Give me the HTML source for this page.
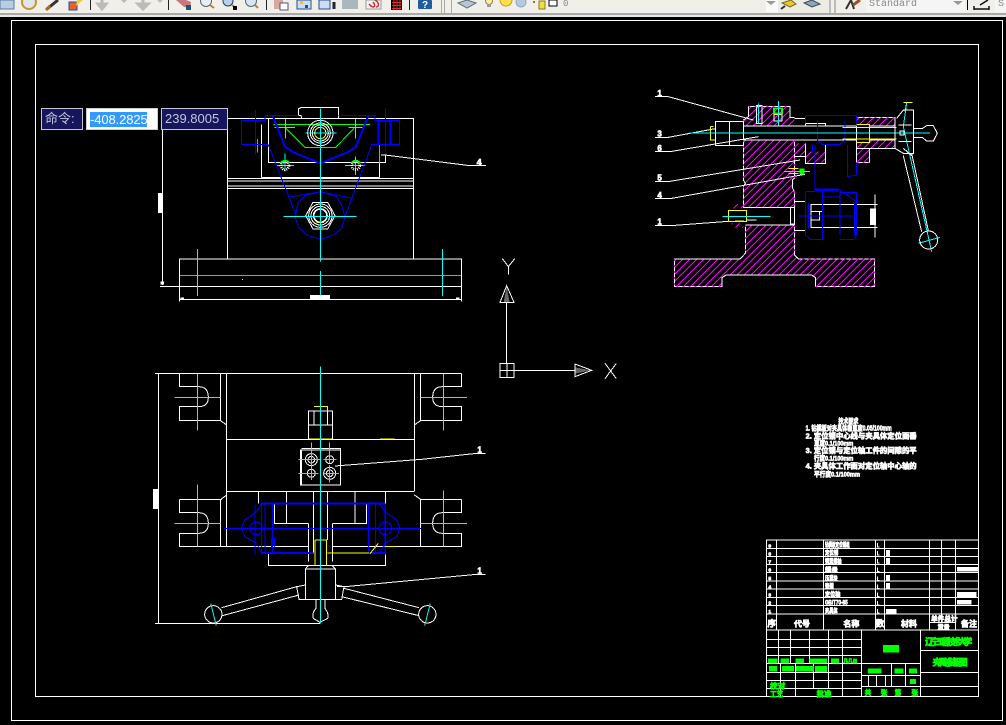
<!DOCTYPE html>
<html><head><meta charset="utf-8"><style>
html,body{margin:0;padding:0;background:#000}
#r{position:relative;width:1006px;height:725px;overflow:hidden;background:#000;font-family:"Liberation Sans","Noto Sans CJK SC",sans-serif}
.b{position:absolute;box-sizing:border-box;background:#16165c;border:1px solid #c4c4dc;color:#c4c4dc;font-size:13px;height:22px;line-height:20px;top:108px}
svg{position:absolute;left:0;top:0}
.w{fill:none;stroke:#fff;stroke-width:3}
.u{fill:none;stroke:#00f;stroke-width:3}
.t{fill:none;stroke:#00f;stroke-width:6}
.c{fill:none;stroke:#0ff;stroke-width:3}
.g{fill:none;stroke:#0f0;stroke-width:3}
.y{fill:none;stroke:#ff0;stroke-width:3}
.m{fill:none;stroke:#f0f;stroke-width:3;stroke-dasharray:6 12}
.n{font-family:"Liberation Sans","Noto Sans CJK SC",sans-serif;font-weight:bold;fill:#fff;stroke:#fff;stroke-width:2}
.gt{font-family:"Liberation Sans","Noto Sans CJK SC",sans-serif;font-weight:bold;fill:#0f0;stroke:#0f0;stroke-width:2}
</style></head><body><div id="r">
<svg width="1006" height="725" viewBox="0 0 1006 725" shape-rendering="crispEdges">
<defs>
<clipPath id="hc"><path d="M310 165H463V280L458 310L463 320V367H310V305L316 295L310 285ZM316 420H463V510L475 522H703V605H527V578L515 570H258L246 578V605H103V522H300L316 505ZM325 65H450V98H463V123H310V105L325 95ZM650 98H765V125H688V118H650ZM650 170H688V165H765V190H688V232H650ZM463 175H497V200H557V236H497V215H463ZM275 357H310V370H275ZM275 415H310V428H275Z"/></clipPath>
</defs>

<!-- toolbar -->
<rect x="0" y="0" width="1006" height="13" fill="#f0efe9"/>
<rect x="0" y="13" width="1006" height="2" fill="#a9a9a9"/>
<rect x="0" y="15" width="1006" height="2" fill="#e8e8e8"/>
<g shape-rendering="auto">
<rect x="0" y="0" width="14" height="9" fill="#b8cce4" stroke="#5a7aa0"/>
<circle cx="29" cy="2" r="7" fill="#dfe6ee" stroke="#c09a30" stroke-width="2"/>
<path d="M47 9L58 0" stroke="#333" stroke-width="3"/><path d="M46 10L50 6" stroke="#a86a20" stroke-width="3"/>
<rect x="69" y="2" width="8" height="8" fill="#e8622a" stroke="#2050a0"/><path d="M77 0L83 0L76 6Z" fill="#f0d040"/>
<path d="M102 0V6M98 4L102 9L106 4Z" stroke="#bbb" stroke-width="3" fill="#bbb"/><path d="M121 0L127 0L124 3Z" fill="#bbb"/>
<path d="M143 0V6M138 4L143 9L148 4Z" stroke="#bbb" stroke-width="3" fill="#bbb"/><path d="M157 0L163 0L160 3Z" fill="#bbb"/>
<path d="M176 0L184 7L190 8L191 2L186 0Z" fill="#c87878"/><rect x="186" y="5" width="5" height="5" fill="#205080"/>
<circle cx="206" cy="1" r="5.500" fill="#e8eef4" stroke="#567"/><path d="M210 5L214 8" stroke="#c08030" stroke-width="2"/>
<circle cx="228" cy="1" r="5" fill="#b8d0e8" stroke="#246"/><path d="M232 5L236 8" stroke="#c08030" stroke-width="2"/><rect x="233" y="6" width="4" height="4" fill="#000"/>
<circle cx="251" cy="1" r="5.500" fill="#d8e4f0" stroke="#567"/><path d="M255 5L258 8" stroke="#c08030" stroke-width="2"/>
<rect x="274" y="0" width="9" height="9" fill="#d8a8a0"/><rect x="280" y="3" width="8" height="7" fill="#fff" stroke="#556"/>
<rect x="297" y="0" width="14" height="9" fill="#cfdcf0" stroke="#24508c"/><rect x="300" y="1" width="3" height="3" fill="#e8c040"/><rect x="305" y="5" width="3" height="3" fill="#24508c"/>
<rect x="319" y="0" width="11" height="9" fill="#cfdcf0" stroke="#24508c"/><path d="M334 2V9" stroke="#223" stroke-width="3"/>
<rect x="342" y="0" width="16" height="9" fill="#a9b8bc"/>
<rect x="366" y="0" width="15" height="9" fill="#f4f4f4" stroke="#999"/><path d="M369 4C373 9 377 7 373 2M375 0C380 3 379 7 376 7" stroke="#d03030" stroke-width="1.500" fill="none"/>
<rect x="391" y="0" width="11" height="10" fill="#000"/><path d="M392 2.500H401M392 5.500H401M392 8.500H401M394 0V10M397 0V10M400 0V10" stroke="#e03030"/>
<rect x="418" y="0" width="14" height="9" rx="1" fill="#1f5d9c"/>
<text x="422" y="8" font-size="10" font-weight="bold" fill="#fff">?</text>
<path d="M458 3L467 0L476 3L467 8Z" fill="#b9c5d2" stroke="#5d6d7d"/>
<circle cx="489" cy="1" r="3.500" fill="#fbf2a0" stroke="#99803a"/><rect x="487" y="4" width="4" height="3" fill="#999"/>
<circle cx="506" cy="0" r="6" fill="#ffe24a" stroke="#c89b1a"/>
<circle cx="521" cy="2" r="5" fill="#b4c8e0" stroke="#8fa8c4"/>
<rect x="539" y="1" width="6" height="8" fill="#ece040" stroke="#8a7a20"/>
<path d="M533 2h2" stroke="#a07020" stroke-width="2"/>
<rect x="549" y="0" width="8" height="6" fill="#fff" stroke="#000"/>
<rect x="766" y="0" width="12" height="12" fill="#fafafa"/>
<path d="M766 1H776L771 5Z" fill="#999"/>
<rect x="778" y="0" width="50" height="13" fill="#ecece4"/>
<path d="M782 3L791 0L796 4L790 7Z" fill="#e8c830" stroke="#7a6a10"/><path d="M781 9L785 6" stroke="#234" stroke-width="2"/>
<path d="M804 3L812 0L820 4L812 7Z" fill="#8ca4bc" stroke="#3a4a5a"/>
<rect x="829" y="0" width="2" height="13" fill="#bbb"/><rect x="834" y="0" width="2" height="13" fill="#bbb"/>
<path d="M846 9L851 0M851 0L854 9" stroke="#333" stroke-width="2" fill="none"/><path d="M853 5L860 0" stroke="#a05020" stroke-width="3"/>
<rect x="866" y="0" width="99" height="12" fill="#f5f5f5"/>
<path d="M953 1H963L958 5Z" fill="#999"/>
<text x="869" y="6" font-size="10" font-family="Liberation Mono" fill="#888">Standard</text>
<rect x="967" y="0" width="1" height="10" fill="#000"/>
<path d="M974 9H989M980 5L988 0M974 6V10M989 6V10" stroke="#111" stroke-width="1.500"/>
<rect x="995" y="0" width="11" height="12" fill="#f5f5f5"/>
<text x="998" y="6" font-size="10" font-family="Liberation Mono" fill="#888">S</text>
<text x="563" y="6" font-size="9" font-family="Liberation Mono" fill="#888">0</text>
</g>
<path d="M90.500 0V10M168.500 0V10M266.500 0V10M409.500 0V10" stroke="#222"/>
<path d="M441.500 0V13M444.500 0V13M451.500 0V13" stroke="#aaa"/>

<!-- frames -->
<rect x="11.500" y="20.500" width="991" height="700" fill="none" stroke="#fff"/>
<rect x="35.500" y="44.500" width="943" height="652" fill="none" stroke="#fff"/>

<!-- front view -->
<g transform="translate(150,95) scale(.33333)">
<path class="w" d="M233 492V70H790V492M88 492H935V613H88ZM30 574H935M88 613V620M935 613V620M38 105V570M335 248V88M688 205V248M335 248H688M355 70V203H707V175M233 250H790M233 258H790M233 273H790M233 281H790M445 62V42L453 38H566V70M445 62H453L455 70M693 180H705L960 212H1008"/>
<rect x="24" y="294" width="14" height="60" fill="#fff"/><rect x="480" y="600" width="60" height="13" fill="#fff"/>
<rect x="32" y="560" width="10" height="8" fill="#fff"/><rect x="92" y="608" width="10" height="4" fill="#fff"/><rect x="918" y="608" width="10" height="4" fill="#fff"/>
<path class="g" d="M90 541H933M370 88H660M408 100L465 157H557L612 100M322 132V172M688 150V205"/>
<path class="c" d="M142 462V603M877 462V603M373 97H435M406 72V130M595 97H640M617 72V130M378 212H432M405 175V230M585 212H645M617 185V240"/>
<path class="u" d="M274 76H345V62H445M274 76V148H355M317 45V178M566 62H675V76H748V148H665M706 40V178M355 150L440 365M665 150L585 365M415 307L511 290L608 310M435 365L445 320L470 300L511 290L560 305L575 330L585 365L575 400L550 420L511 433L470 420L445 395L435 365"/>
<path class="t" d="M368 62L405 155L430 172L511 205L592 172L618 155L655 62M685 76V148M722 76V148M685 78H728"/>
<circle cx="511" cy="114" r="38" class="w"/><circle cx="511" cy="114" r="30" class="w"/><circle cx="511" cy="114" r="24" class="w"/>
<circle cx="511" cy="362" r="35" class="w"/><circle cx="511" cy="362" r="28" class="w"/><circle cx="511" cy="362" r="20" class="w" style="stroke-width:5"/>
<path class="w" d="M467 362L489 322H533L555 362L533 402H489Z"/>
<circle cx="405" cy="212" r="12" class="w" style="stroke-width:8;stroke-dasharray:3 3"/><circle cx="617" cy="212" r="12" class="w" style="stroke-width:8;stroke-dasharray:3 3"/>
<path d="M392 205A15 15 0 0 1 418 205" class="g" style="stroke-width:6"/><path d="M604 205A15 15 0 0 1 630 205" class="g" style="stroke-width:6"/>
<circle cx="511" cy="114" r="17" class="y"/>
<path d="M500 382H522" class="y"/>
<path class="c" d="M511 40V500M511 528V600M467 114H560M400 364H620"/>
<rect x="276" y="552" width="3" height="3" fill="#ff0"/>
<text x="980" y="212" font-size="27" class="n">4</text>
</g>

<!-- section view -->
<g transform="translate(640,85) scale(.33333)">
<path clip-path="url(#hc)" fill="none" stroke="#f0f" stroke-width="3" d="M168 0L0 168M189 0L0 189M210 0L0 210M231 0L0 231M252 0L0 252M273 0L0 273M294 0L0 294M315 0L0 315M336 0L0 336M357 0L0 357M378 0L0 378M399 0L0 399M420 0L0 420M441 0L0 441M462 0L0 462M483 0L0 483M504 0L0 504M525 0L0 525M546 0L0 546M567 0L0 567M588 0L0 588M609 0L0 609M630 0L0 630M651 0L0 651M672 0L0 672M693 0L0 693M714 0L0 714M735 0L0 735M756 0L0 756M777 0L0 777M798 0L0 798M819 0L0 819M840 0L0 840M861 0L0 861M882 0L0 882M903 0L0 903M924 0L0 924M945 0L0 945M966 0L0 966M987 0L0 987M1008 0L0 1008M1029 0L0 1029M1050 0L0 1050M1071 0L0 1071M1092 0L0 1092M1113 0L0 1113M1134 0L0 1134M1155 0L0 1155M1176 0L0 1176M1197 0L0 1197M1218 0L0 1218M1239 0L0 1239M1260 0L0 1260M1281 0L0 1281M1302 0L0 1302M1323 0L0 1323M1344 0L0 1344M1365 0L0 1365"/>
<path class="w" d="M310 123V165H650M310 123H650M226 109H310V181H226ZM268 109V181M316 420V505L300 522H103V605H246V578L258 570H515L527 578V605H703V522H475L463 510V320L458 310V285L463 280V165M310 165V285L316 295L310 305V367H463M316 420H463M463 100H497V123M463 349H497V437H463M451 367H463V417H451ZM497 115H557V123M688 123H765V165H688M650 98H765V123M650 190H765M765 98V190M650 123V232H688V190M310 105L325 95V65H450V98H463M350 62H366V115H350ZM402 88H426V108H402ZM463 175V215H497M497 175V236H557V180M45 35H85L340 105M45 157H85L226 131M45 200H90L355 155M45 289H90L480 225M45 341H90L495 268M45 421H105L265 409M320 405H350M513 358H548V427H513ZM513 358H712M513 427H712M513 380H548M538 380V405H513M705 328V458"/>
<path class="m" d="M103 522V605H246M527 605H703V522H475M325 65H450M310 165V285M310 305V367M463 165V280M463 320V367M316 420V505M463 420V510M650 98H765M650 232H688"/>
<rect x="690" y="370" width="18" height="50" fill="#fff"/>
<path class="u" d="M497 92H650V115M497 92V115M533 107V165L545 178H600L615 165V107M518 178V200M525 180V310M622 180V275L650 270V232M497 320H525V312H595L650 350V322H600V450M497 322V450L512 464H548V312M598 464H640L650 450V350M548 336H598M475 393H640"/>
<path class="t" d="M505 355V430M645 355V452M525 315H595"/>
<path class="y" d="M211 125V165H226M211 125H220M650 118H688V172H650M608 128H770M608 162H770M265 376V410H320V376ZM285 408H312M445 250H475M445 265H475M402 88H426M790 53H818M800 53L795 80"/>
<rect x="478" y="250" width="16" height="18" fill="#0f0"/><path class="g" d="M402 70H426V85H402Z" style="stroke-width:5"/>
<path class="c" d="M148 144H870M415 48V122M355 55V115M247 394H392M432 260H510M800 55L790 125L875 500M835 475L900 457"/>
<path class="w" d="M770 100L790 75H820V205H790L765 190M765 100V190M775 120H815M775 170H815M820 130H848L860 122H880L892 145L880 168H860L848 158H820M790 212L845 440M815 205L865 437M790 190L815 212"/><circle class="w" cx="866" cy="465" r="27"/><rect class="w" x="780" y="138" width="12" height="12"/>
<text x="52" y="33" font-size="24" class="n">1</text><text x="52" y="155" font-size="24" class="n">3</text><text x="52" y="198" font-size="24" class="n">6</text><text x="52" y="287" font-size="24" class="n">5</text><text x="52" y="339" font-size="24" class="n">4</text><text x="52" y="419" font-size="24" class="n">1</text>
</g>

<!-- top view -->
<g transform="translate(145,365) scale(.33333)">
<path class="w" d="M30 25H950M40 25V775M30 775H525M245 25V545M808 25V378M227 25V166M827 25V166M103 25V65H160Q190 65 190 97Q190 125 160 125H103V166H225L245 180M950 25V65H893Q863 65 863 97Q863 125 893 125H950V166H828L808 180M245 223H808M245 379H808M103 403H228L245 390M103 403V443H160Q190 443 190 475Q190 505 160 505H103V545H490M950 403H827L808 390M950 403V443H893Q863 443 863 475Q863 505 893 505H950V545H563M227 403V545M827 403V545M490 138H563V180H490ZM490 180H563V222H490ZM507 138V180M547 138V180M467 255H587V360H467ZM470 250H587V255M470 255V358M570 303L830 283L995 265H1022M576 665H600L995 628H1022M340 379V415M722 379V415M388 418V475H490M563 475H665V418M424 379V475M630 379V475M490 475V590M563 475V590M505 379V565M547 379V525M370 565V601H722V565M481 612H572V703H481ZM481 612L490 602H562L572 612M481 660L455 665L462 703H481M455 665L230 728M462 690L232 752M572 660L597 665L590 703H572M597 670L822 728M590 695L822 752M513 703V730Q500 745 505 760L525 772L548 760Q552 745 540 730V703"/>
<rect x="24" y="372" width="16" height="60" fill="#fff"/>
<circle class="w" cx="205" cy="748" r="26"/><circle class="w" cx="847" cy="748" r="26"/>
<circle class="w" cx="499" cy="284" r="18"/><circle class="w" cx="499" cy="284" r="10"/><circle class="w" cx="554" cy="284" r="12"/><circle class="w" cx="499" cy="325" r="12"/><circle class="w" cx="554" cy="325" r="18"/><circle class="w" cx="554" cy="325" r="10"/>
<circle class="u" cx="333" cy="490" r="19"/><circle class="u" cx="721" cy="490" r="19"/>
<path class="u" d="M350 415L335 440L300 465L288 490L300 515L335 535L350 565M703 415L720 440L755 465L765 490L755 515L720 535L703 565M235 490H828M330 418V568M722 418V568M350 415V565M360 415V565M383 415V565M670 415V565M692 415V565M720 415V565M379 520H388V548H379Z"/>
<path class="t" d="M350 415H720M350 564H505M672 564H720"/>
<path class="y" d="M507 124H547V138M495 222H560M705 222H748M525 379H562M510 525H545V600M510 525V600M547 564H672M675 566L700 535M720 544H755"/>
<path class="c" d="M526 5V775M157 27V197M88 97H226M895 27V197M827 97H966M157 358V545M88 475H226M895 376V545M827 475H966M460 284H525M499 232V300M535 284H575M554 232V296M460 325H520M499 300V345M535 325H582M554 300V352M197 715L214 782M856 715L839 782"/>
<text x="997" y="262" font-size="24" class="n">1</text><text x="997" y="626" font-size="24" class="n">1</text>
</g>

<!-- UCS -->
<g transform="translate(490,250) scale(.33333)">
<path d="M50 110L41 157H59Z" fill="#666"/><path d="M255 352V371L302 361Z" fill="#666"/>
<path class="w" d="M30 157H72L50 107ZM50 157V340M30 340H72V382H30ZM30 361H72M51 340V382M72 361H255M255 342V380L305 361ZM37 26L55 50L74 26M55 50V74M345 340L379 386M379 340L345 386"/>
</g>

<!-- notes -->
<g transform="translate(790,410) scale(.33333)">
<text x="145" y="40" font-size="21" class="n" textLength="60" lengthAdjust="spacingAndGlyphs">技术要求</text>
<text x="47" y="62" font-size="21" class="n" textLength="258" lengthAdjust="spacingAndGlyphs">1. 钻模板对夹具体垂直度0.05/100mm</text>
<text x="47" y="85" font-size="22" class="n" textLength="333" lengthAdjust="spacingAndGlyphs">2. 定位销中心线与夹具体定位面垂</text>
<text x="72" y="106" font-size="20" class="n" textLength="118" lengthAdjust="spacingAndGlyphs">直度0.1/100mm</text>
<text x="47" y="129" font-size="22" class="n" textLength="333" lengthAdjust="spacingAndGlyphs">3. 定位销与定位轴工件的间隙的平</text>
<text x="72" y="152" font-size="20" class="n" textLength="118" lengthAdjust="spacingAndGlyphs">行度0.1/100mm</text>
<text x="47" y="176" font-size="22" class="n" textLength="333" lengthAdjust="spacingAndGlyphs">4. 夹具体工作面对定位轴中心轴的</text>
<text x="72" y="200" font-size="20" class="n" textLength="138" lengthAdjust="spacingAndGlyphs">平行度0.1/100mm</text>
</g>

<!-- title block -->
<g transform="translate(760,535) scale(.33333)">
<path class="w" d="M18 15H655M18 40H655M18 64H655M18 88H655M18 113H655M18 138H655M18 162H655M18 187H655M18 212H655M18 237H655M18 285H655M20 15V485M49 15V285M190 15V285M346 15V285M373 15V285M508 15V285M545 15V262M586 15V285M655 0V485M508 262H586M20 313H304M20 337H304M20 361H304M20 385H304M20 412H304M20 436H304M20 460H304M55 285V385M91 285V385M148 285V385M205 285V460M247 285V485M61 385V485M106 385V485M160 385V460M304 285V485M304 385H482M304 422H482M304 455H655M326 422V455M349 422V455M376 422V455M394 385V455M436 385V455M482 285V485M482 346H655M482 412H655M20 484H655"/>
<text x="195" y="36" font-size="18" class="n" textLength="74" lengthAdjust="spacingAndGlyphs">钻模板定位销组</text>
<text x="195" y="60" font-size="18" class="n" textLength="40" lengthAdjust="spacingAndGlyphs">定位销</text>
<text x="195" y="85" font-size="18" class="n" textLength="50" lengthAdjust="spacingAndGlyphs">锁紧螺栓</text>
<text x="195" y="111" font-size="18" class="n" textLength="38" lengthAdjust="spacingAndGlyphs">螺母</text>
<text x="195" y="136" font-size="18" class="n" textLength="38" lengthAdjust="spacingAndGlyphs">压紧块</text>
<text x="195" y="160" font-size="18" class="n" textLength="26" lengthAdjust="spacingAndGlyphs">垫圈</text>
<text x="195" y="185" font-size="18" class="n" textLength="46" lengthAdjust="spacingAndGlyphs">定位轴</text>
<text x="195" y="209" font-size="18" class="n" textLength="68" lengthAdjust="spacingAndGlyphs">GB/T70-85</text>
<text x="195" y="234" font-size="18" class="n" textLength="38" lengthAdjust="spacingAndGlyphs">夹具体</text>
<rect x="378" y="45" width="12" height="18" fill="#fff"/><rect x="378" y="69" width="12" height="18" fill="#fff"/><rect x="378" y="120" width="12" height="17" fill="#fff"/><rect x="378" y="144" width="12" height="17" fill="#fff"/><rect x="378" y="222" width="32" height="15" fill="#fff"/>
<rect x="591" y="96" width="64" height="14" fill="#fff"/><rect x="591" y="171" width="58" height="15" fill="#fff"/><rect x="591" y="195" width="44" height="14" fill="#fff"/>
<path class="w" d="M352 24V36H358M352 48V60H358M352 72V84H358M352 98V110H358M352 124V136H358M352 148V160H358M352 172V184H358M352 198V210H358M352 222V234H358"/>
<text x="25" y="37" font-size="15" class="n">9</text><text x="25" y="61" font-size="15" class="n">8</text><text x="25" y="85" font-size="15" class="n">7</text><text x="25" y="110" font-size="15" class="n">6</text><text x="25" y="135" font-size="15" class="n">5</text><text x="25" y="160" font-size="15" class="n">4</text><text x="25" y="184" font-size="15" class="n">3</text><text x="25" y="209" font-size="15" class="n">2</text><text x="25" y="234" font-size="15" class="n">1</text>
<text x="22" y="275" font-size="26" class="n">序</text><text x="102" y="275" font-size="24" class="n">代号</text><text x="250" y="275" font-size="24" class="n">名称</text><text x="347" y="275" font-size="26" class="n">数</text><text x="423" y="275" font-size="24" class="n">材料</text><text x="513" y="258" font-size="20" class="n">单件</text><text x="553" y="258" font-size="20" class="n">总计</text><text x="533" y="284" font-size="18" class="n">重量</text><text x="603" y="275" font-size="24" class="n">备注</text>
<rect x="369" y="330" width="48" height="22" fill="#0f0"/>
<rect x="24" y="370" width="28" height="14" fill="#0f0"/><rect x="61" y="370" width="26" height="14" fill="#0f0"/><rect x="107" y="370" width="25" height="14" fill="#0f0"/><rect x="149" y="370" width="52" height="14" fill="#0f0"/><rect x="213" y="370" width="24" height="14" fill="#0f0"/>
<text x="250" y="383" font-size="14" class="gt">几几日</text>
<rect x="27" y="393" width="24" height="16" fill="#0f0"/><rect x="66" y="393" width="36" height="16" fill="#0f0"/><rect x="108" y="393" width="54" height="16" fill="#0f0"/><rect x="165" y="393" width="36" height="18" fill="#0f0"/>
<rect x="324" y="400" width="40" height="16" fill="#0f0"/><rect x="404" y="400" width="26" height="16" fill="#0f0"/><rect x="447" y="400" width="24" height="16" fill="#0f0"/><rect x="450" y="432" width="18" height="15" fill="#0f0"/>
<text x="30" y="460" font-size="23" class="gt">校对</text>
<text x="30" y="484" font-size="20" class="gt">工艺</text><text x="170" y="484" font-size="22" class="gt">批准</text>
<text x="314" y="480" font-size="20" class="gt">共</text><text x="362" y="480" font-size="20" class="gt">张</text><text x="404" y="480" font-size="20" class="gt">第</text><text x="454" y="480" font-size="20" class="gt">张</text>
<text x="495" y="330" font-size="28" class="gt" textLength="142">辽宁工程技术大学</text>
<text x="517" y="392" font-size="28" class="gt" textLength="106">夹具总装配图</text>
</g>
</svg>
<div class="b" style="left:41px;width:42px;padding-left:3px">命令:</div>
<div class="b" style="left:86px;width:72px;background:#fff;border-color:#ccc"><span style="position:absolute;left:3px;top:3px;height:15px;width:57px;background:#3399ff;color:#fff;line-height:15px;white-space:nowrap;letter-spacing:-.1px;overflow:hidden">-408.2825</span></div>
<div class="b" style="left:161px;width:67px;padding-left:3px">239.8005</div>
</div></body></html>
